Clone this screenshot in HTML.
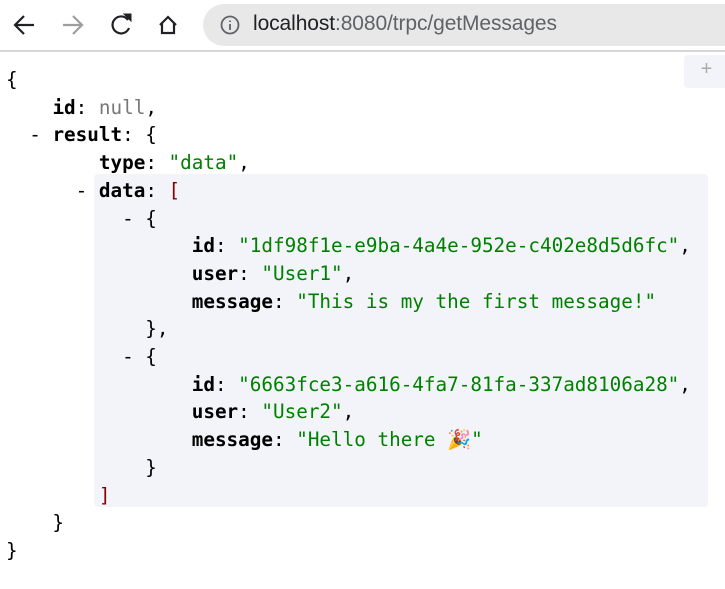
<!DOCTYPE html>
<html><head><meta charset="utf-8"><style>
html,body{margin:0;padding:0;background:#fff;width:725px;height:589px;overflow:hidden}
.bar{position:absolute;left:0;top:0;width:725px;height:52px;background:#fff;border-bottom:2px solid #d6d6d6;box-sizing:border-box}
.pill{position:absolute;left:203px;top:4px;width:560px;height:42px;border-radius:21px;background:#e8e8e8}
.url{position:absolute;left:253px;top:12px;font:21px "Liberation Sans",sans-serif;color:#5f6368;white-space:pre;letter-spacing:-0.1px}
.url b{font-weight:normal;color:#202124}
.plus{position:absolute;left:684px;top:55px;width:45px;height:33px;background:#f3f4f9;border-radius:4px;color:#aaa;font:20px "Liberation Sans",sans-serif;text-align:center;line-height:28px}
.hl{position:absolute;left:94px;top:174px;width:614px;height:333px;background:#f3f4f9;border-radius:4px}
pre{position:absolute;left:6px;top:66px;margin:0;font:19.3px "DejaVu Sans Mono","Liberation Mono",monospace;line-height:27.7px;color:#000}
.k{font-weight:bold}
.s{color:#008000}
.n{color:#777}
.r{color:#800}
</style></head><body>
<div class="bar">
<svg width="200" height="52" style="position:absolute;left:0;top:0" fill="none" stroke-width="2.2">
<path d="M34 25H16M24 16l-9 9 9 9" stroke="#202124"/>
<path d="M63 25h18M73 16l9 9-9 9" stroke="#9e9e9e"/>
<path d="M128 20a8.5 8.5 0 1 0 1 8" stroke="#202124"/>
<path d="M124 14h7v7z" fill="#202124" stroke="#202124" stroke-width="1"/>
<path d="M160 25l8-8 8 8M162 23v10h12V23" stroke="#202124"/>
</svg>
<div class="pill"></div>
<svg width="22" height="22" style="position:absolute;left:219px;top:14px" fill="none" stroke="#5f6368" stroke-width="1.8"><circle cx="11" cy="11" r="8.5"/><path d="M11 10v6M11 6.5v1.5"/></svg>
<div class="url"><b>localhost</b>:8080/trpc/getMessages</div>
</div>
<div class="plus">+</div>
<div class="hl"></div>
<pre>{
    <span class="k">id</span>: <span class="n">null</span>,
  - <span class="k">result</span>: {
        <span class="k">type</span>: <span class="s">"data"</span>,
      - <span class="k">data</span>: <span class="r">[</span>
          - {
                <span class="k">id</span>: <span class="s">"1df98f1e-e9ba-4a4e-952e-c402e8d5d6fc"</span>,
                <span class="k">user</span>: <span class="s">"User1"</span>,
                <span class="k">message</span>: <span class="s">"This is my the first message!"</span>
            },
          - {
                <span class="k">id</span>: <span class="s">"6663fce3-a616-4fa7-81fa-337ad8106a28"</span>,
                <span class="k">user</span>: <span class="s">"User2"</span>,
                <span class="k">message</span>: <span class="s">"Hello there 🎉"</span>
            }
        <span class="r">]</span>
    }
}</pre>
</body></html>
